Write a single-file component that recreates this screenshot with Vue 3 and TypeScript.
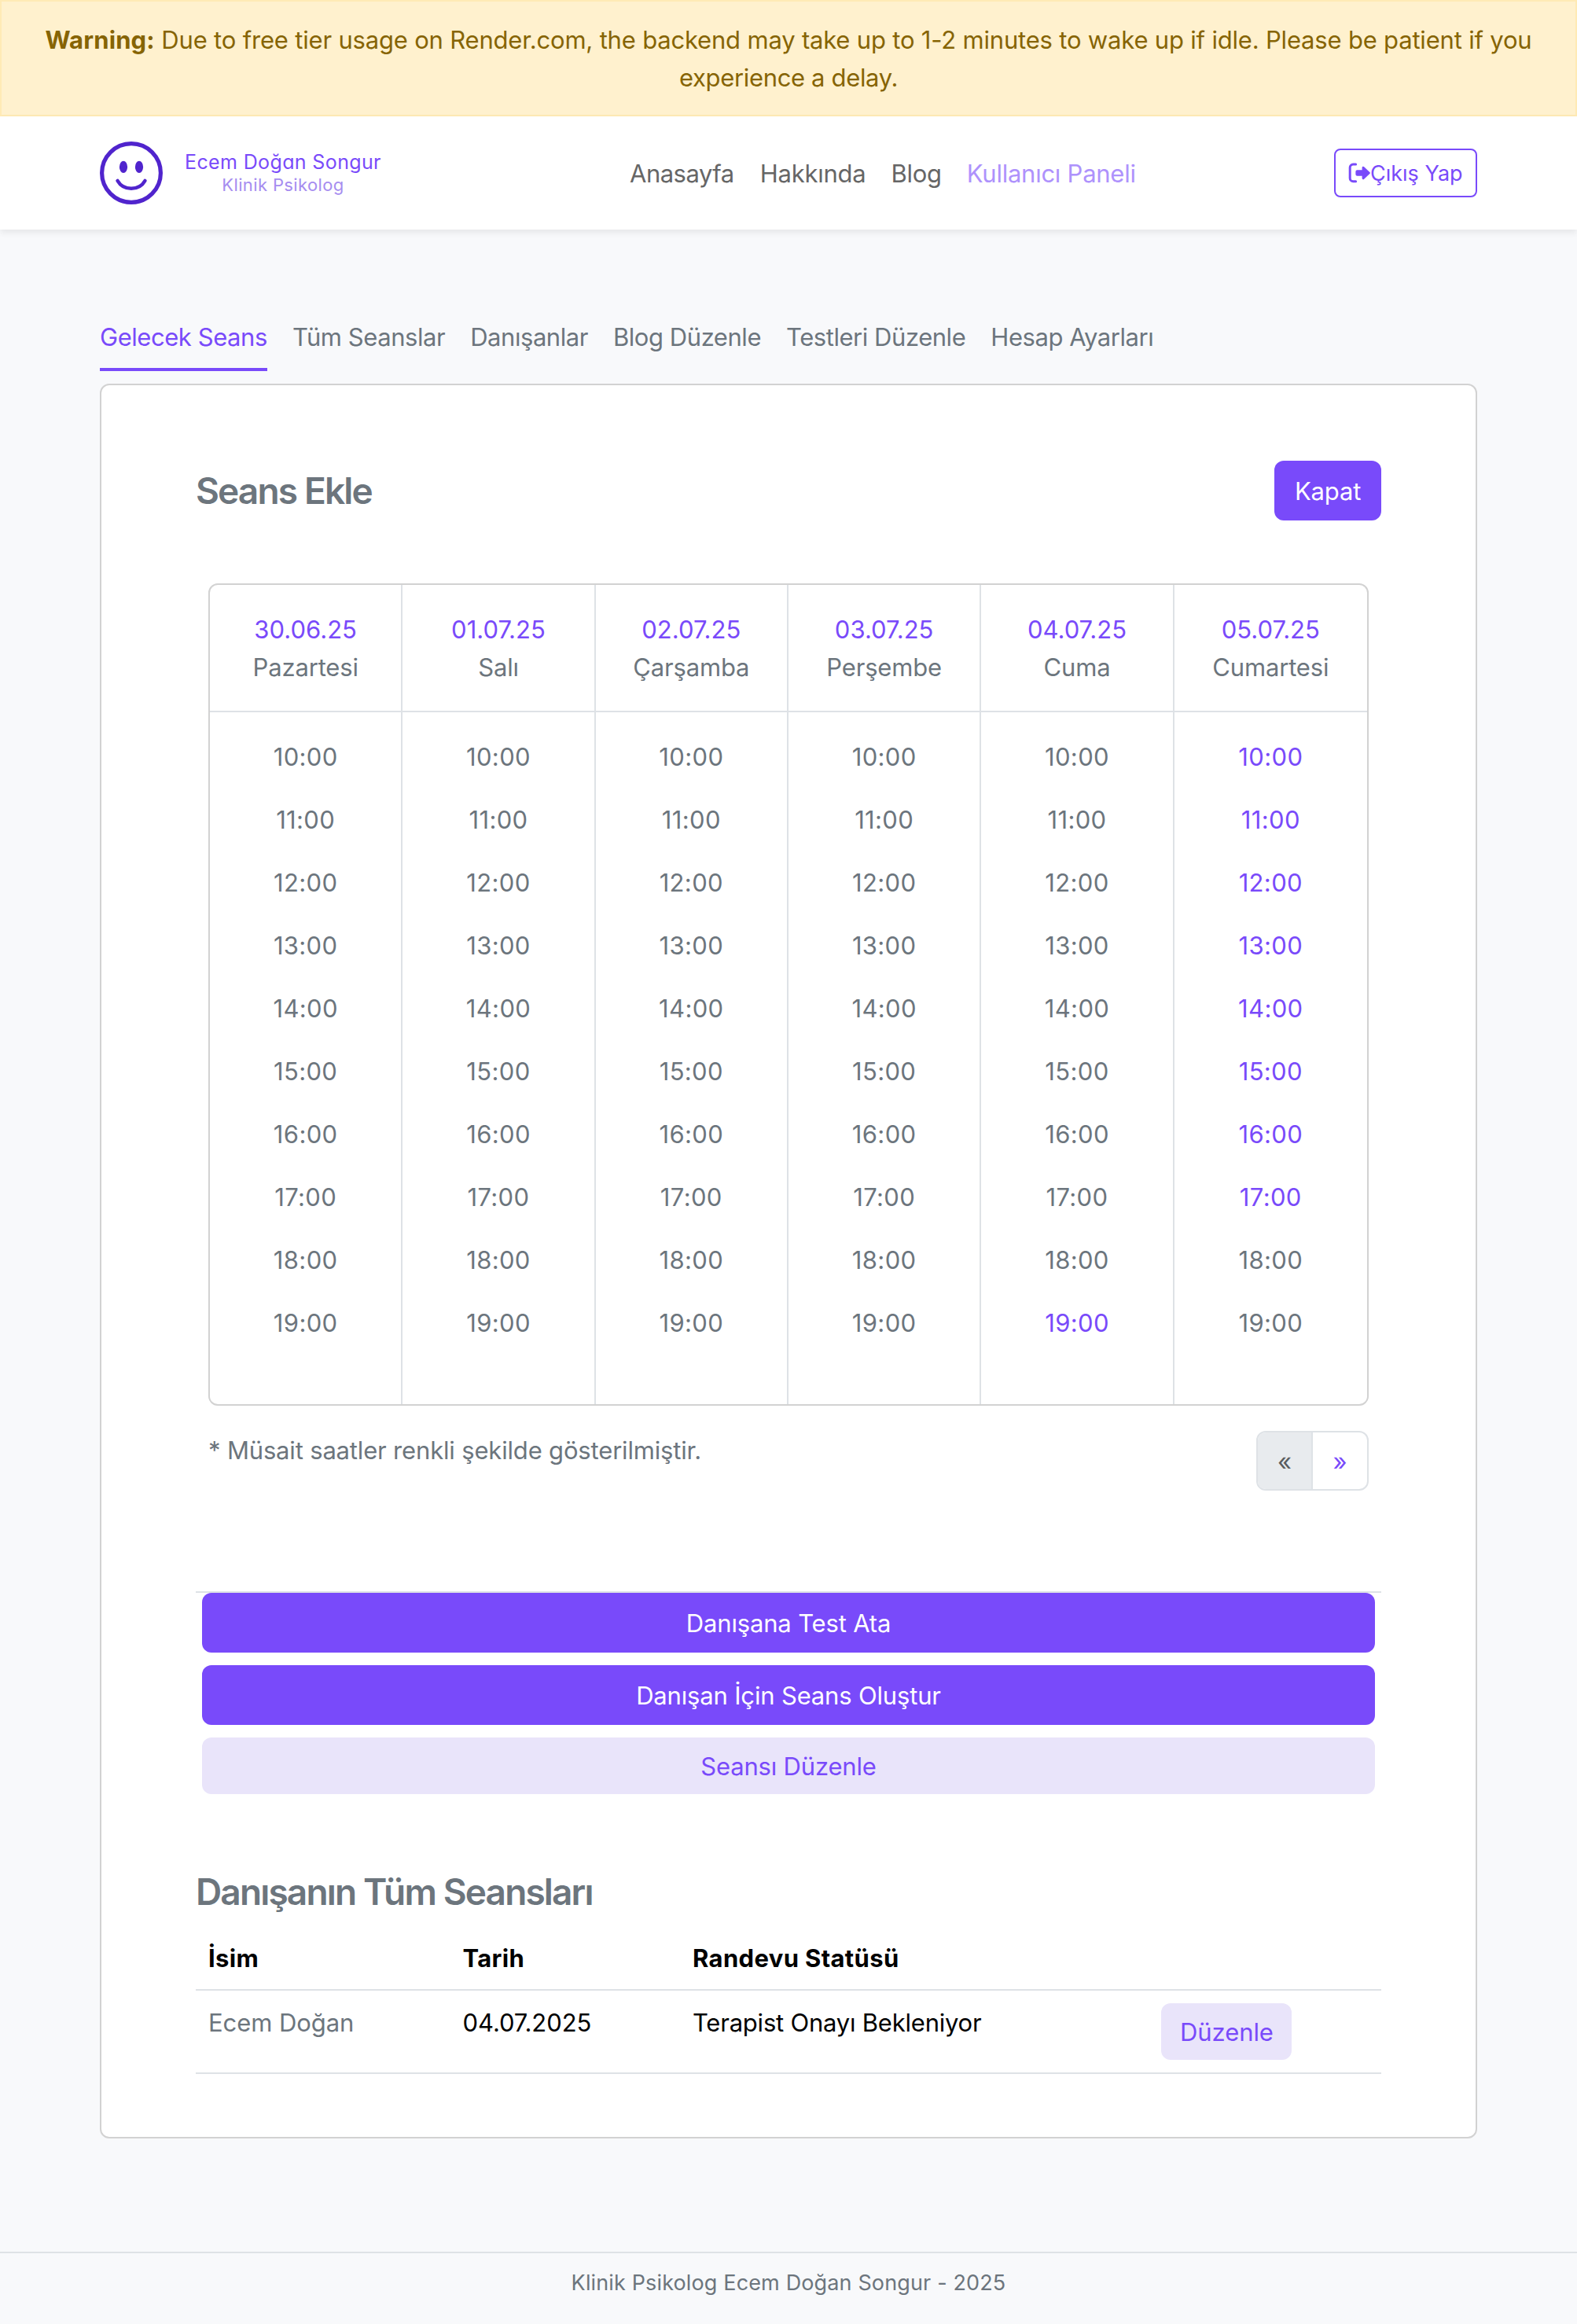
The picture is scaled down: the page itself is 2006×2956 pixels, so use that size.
<script setup lang="ts">
interface NavItem {
  label: string
  active?: boolean
}

interface Day {
  date: string
  name: string
  available: string[]
}

const links: NavItem[] = [
  { label: 'Anasayfa' },
  { label: 'Hakkında' },
  { label: 'Blog' },
  { label: 'Kullanıcı Paneli', active: true },
]

const tabs: NavItem[] = [
  { label: 'Gelecek Seans', active: true },
  { label: 'Tüm Seanslar' },
  { label: 'Danışanlar' },
  { label: 'Blog Düzenle' },
  { label: 'Testleri Düzenle' },
  { label: 'Hesap Ayarları' },
]

const hours: string[] = Array.from({ length: 10 }, (_, i) => `${10 + i}:00`)

const days: Day[] = [
  { date: '30.06.25', name: 'Pazartesi', available: [] },
  { date: '01.07.25', name: 'Salı', available: [] },
  { date: '02.07.25', name: 'Çarşamba', available: [] },
  { date: '03.07.25', name: 'Perşembe', available: [] },
  { date: '04.07.25', name: 'Cuma', available: ['19:00'] },
  { date: '05.07.25', name: 'Cumartesi', available: hours.slice(0, 8) },
]

const sessions = [
  { name: 'Ecem Doğan', date: '04.07.2025', status: 'Terapist Onayı Bekleniyor' },
]
</script>

<template>
  <div class="page">
    <div class="alert" role="alert">
      <strong>Warning:</strong> Due to free tier usage on Render.com, the backend may take up to 1-2
      minutes to wake up if idle. Please be patient if you<br />
      <span class="alert-tail">experience a delay.</span>
    </div>

    <header class="navbar">
      <a class="brand">
        <svg class="logo" viewBox="0 0 80 80" width="80" height="80" fill="none">
          <circle cx="40" cy="40" r="37.4" stroke="#5024cd" stroke-width="5.2" />
          <ellipse cx="30" cy="32.4" rx="5.1" ry="7.6" fill="#5024cd" />
          <ellipse cx="50" cy="32.4" rx="5.1" ry="7.6" fill="#5024cd" />
          <path d="M22.5 49.8c7.6 13.2 27.4 13.2 35 0" stroke="#5024cd" stroke-width="4.4" stroke-linecap="round" />
        </svg>
        <span class="brand-text">
          <span class="brand-name">Ecem Doğan Songur</span>
          <span class="brand-role">Klinik Psikolog</span>
        </span>
      </a>
      <nav class="links">
        <a v-for="link in links" :key="link.label" class="link" :class="{ active: link.active }">{{ link.label }}</a>
      </nav>
      <button class="logout" type="button">
        <svg class="logout-icon" viewBox="0 0 28 26" width="28" height="26" fill="none">
          <path d="M9.6 2.1H6.2a4 4 0 0 0-4 4v13.6a4 4 0 0 0 4 4h3.4" stroke="currentColor" stroke-width="3" stroke-linecap="round" />
          <path d="M11.4 9.2h6.2V6.2a1.5 1.5 0 0 1 2.6-1l7.1 6.7a1.5 1.5 0 0 1 0 2.2l-7.1 6.7a1.5 1.5 0 0 1-2.6-1v-3h-6.2a2 2 0 0 1-2-2v-3.6a2 2 0 0 1 2-2z" fill="currentColor" />
        </svg>
        <span class="logout-label">Çıkış Yap</span>
      </button>
    </header>

    <main class="main">
      <nav class="tabs">
        <a v-for="tab in tabs" :key="tab.label" class="tab" :class="{ active: tab.active }">{{ tab.label }}</a>
      </nav>

      <section class="card">
        <div class="card-head">
          <h4 class="title">Seans Ekle</h4>
          <button class="btn primary" type="button">Kapat</button>
        </div>

        <div class="schedule">
          <div v-for="day in days" :key="day.date" class="day">
            <div class="day-head">
              <div class="day-date">{{ day.date }}</div>
              <div>{{ day.name }}</div>
            </div>
            <ul class="hours">
              <li
                v-for="hour in hours"
                :key="hour"
                class="hour"
                :class="{ available: day.available.includes(hour) }"
              >{{ hour }}</li>
            </ul>
          </div>
        </div>

        <div class="schedule-foot">
          <p class="note">* Müsait saatler renkli şekilde gösterilmiştir.</p>
          <div class="pagination">
            <span class="page-link disabled">«</span>
            <span class="page-link">»</span>
          </div>
        </div>

        <div class="actions">
          <button class="btn primary" type="button">Danışana Test Ata</button>
          <button class="btn primary" type="button">Danışan İçin Seans Oluştur</button>
          <button class="btn soft" type="button">Seansı Düzenle</button>
        </div>

        <h4 class="title list-title">Danışanın Tüm Seansları</h4>
        <table class="table">
          <colgroup>
            <col class="col-name" />
            <col class="col-date" />
            <col class="col-status" />
            <col />
          </colgroup>
          <thead>
            <tr>
              <th>İsim</th>
              <th>Tarih</th>
              <th>Randevu Statüsü</th>
              <th></th>
            </tr>
          </thead>
          <tbody>
            <tr v-for="session in sessions" :key="session.date">
              <td class="muted">{{ session.name }}</td>
              <td>{{ session.date }}</td>
              <td class="status">{{ session.status }}</td>
              <td class="action"><button class="btn soft" type="button">Düzenle</button></td>
            </tr>
          </tbody>
        </table>
      </section>
    </main>

    <footer class="footer">Klinik Psikolog Ecem Doğan Songur - 2025</footer>
  </div>
</template>

<style>
body {
  background: #f8f9fb;
}
</style>

<style scoped>
.page,
.page * {
  box-sizing: border-box;
}

.page {
  display: flex;
  flex-direction: column;
  width: 2006px;
  height: 2956px;
  font-family: Inter, 'Liberation Sans', sans-serif;
  font-size: 31px;
  line-height: 48px;
  letter-spacing: -0.17px;
  color: #6c757d;
  background: #f8f9fb;
}

button {
  font: inherit;
  letter-spacing: inherit;
  margin: 0;
}

.alert {
  height: 148px;
  padding: 25px 20px 23px;
  border: 2px solid #ffeab5;
  background: #fff1ce;
  color: #866404;
  text-align: center;
  white-space: nowrap;
  letter-spacing: -0.19px;
}

.alert strong {
  font-weight: 700;
  letter-spacing: 0.14px;
}

.alert-tail {
  letter-spacing: -0.34px;
}

.navbar {
  display: flex;
  align-items: center;
  justify-content: space-between;
  height: 144px;
  padding: 0 127px;
  background: #fff;
  box-shadow: 0 4px 8px rgba(0, 0, 0, 0.075);
}

.brand {
  display: flex;
  align-items: center;
  width: 674px;
}

.logo {
  display: block;
}

.brand-text {
  display: flex;
  flex-direction: column;
  align-items: center;
  margin-left: 28px;
  font-feature-settings: 'cv11';
}

.brand-name {
  font-size: 25px;
  line-height: 30px;
  letter-spacing: 0.37px;
  color: #794afa;
}

.brand-role {
  font-size: 22px;
  line-height: 28px;
  letter-spacing: 0.36px;
  color: #a68df0;
}

.links {
  display: flex;
  flex: 1;
  gap: 32px;
  padding-top: 1px;
  color: #666;
}

.link {
  letter-spacing: -0.25px;
}

.link:first-child {
  margin-right: 1px;
  letter-spacing: -0.5px;
}

.link.active {
  color: #ae92fc;
}

.logout {
  display: flex;
  align-items: center;
  width: 182px;
  height: 62px;
  padding: 0 0 0 16px;
  border: 2px solid #794afa;
  border-radius: 8px;
  background: #fff;
  color: #794afa;
  font-size: 27px;
  line-height: 42px;
  white-space: nowrap;
}

.logout-icon {
  display: block;
  flex: none;
}

.logout-label {
  padding-top: 1px;
  letter-spacing: 0;
}

.main {
  padding: 96px 127px 0;
}

.tabs {
  display: flex;
  gap: 32px;
  height: 84px;
  margin-bottom: 16px;
}

.tab {
  padding: 17px 0 15px;
  border-bottom: 4px solid transparent;
  letter-spacing: -0.45px;
}

.tab.active {
  width: 213px;
  border-color: #794afa;
  color: #794afa;
  white-space: nowrap;
}

.card {
  height: 2232px;
  padding: 96px 120px 80px;
  border: 2px solid #d2d2d2;
  border-radius: 12px;
  background: #fff;
}

.card-head {
  display: flex;
  align-items: center;
  justify-content: space-between;
  height: 76px;
}

.title {
  margin: 0;
  font-size: 46px;
  font-weight: 600;
  line-height: 58px;
  letter-spacing: -1.85px;
}

.btn {
  display: block;
  padding: 13px 24px 11px;
  border: 0;
  border-radius: 12px;
  text-align: center;
}

.btn.primary {
  height: 76px;
  background: #794afa;
  color: #fff;
}

.card-head .btn {
  width: 136px;
}

.btn.soft {
  height: 72px;
  background: #e9e4fa;
  color: #794afa;
}

.schedule {
  display: grid;
  grid-template-columns: repeat(6, minmax(0, 1fr));
  height: 1046px;
  margin: 80px 16px 0;
  border: 2px solid #d2d2d2;
  border-radius: 12px;
  text-align: center;
  overflow: hidden;
}

.day {
  border-right: 2px solid #dee2e6;
}

.day:last-child {
  border-right: 0;
}

.day-head {
  height: 162px;
  padding: 33px 0 31px;
  border-bottom: 2px solid #dee2e6;
}

.day-date {
  letter-spacing: 0.02px;
  color: #794afa;
}

.hours {
  margin: 0;
  padding: 17px 0 0;
  list-style: none;
}

.hour {
  padding: 16px 0;
  letter-spacing: 0.35px;
}

.hour.available {
  color: #794afa;
}

.schedule-foot {
  display: flex;
  justify-content: space-between;
  align-items: flex-start;
  margin: 32px 16px 0;
}

.note {
  margin: 0;
  padding-top: 1px;
}

.pagination {
  display: flex;
  width: 143px;
  height: 76px;
  border: 2px solid #dee2e6;
  border-radius: 12px;
  background: #fff;
  overflow: hidden;
}

.page-link {
  flex: 1;
  padding: 13px 0 11px;
  text-align: center;
  color: #794afa;
}

.page-link.disabled {
  flex: 0 0 70px;
  border-right: 2px solid #dee2e6;
  background: #e8ebee;
  color: #5a5d60;
}

.actions {
  display: flex;
  flex-direction: column;
  gap: 16px;
  margin-top: 128px;
  padding: 0 8px;
  border-top: 2px solid #dee2e6;
}

.list-title {
  margin: 95px 0 15px;
}

.table {
  width: 100%;
  table-layout: fixed;
  border-collapse: separate;
  border-spacing: 0;
  text-align: left;
  color: #000;
}

.col-name {
  width: 323.5px;
}

.col-date {
  width: 292.5px;
}

.col-status {
  width: 596px;
}

.table th,
.table td {
  padding: 17px 16px 15px;
  border-bottom: 2px solid #dee2e6;
  vertical-align: top;
}

.table th {
  height: 82px;
  font-weight: 700;
  letter-spacing: 0.35px;
}

.table td {
  letter-spacing: -0.07px;
}

.table .status {
  letter-spacing: -0.22px;
}

.table .action {
  padding: 16px;
}

.table .muted {
  color: #6c757d;
}

.table .btn {
  width: 166px;
}

.footer {
  margin-top: 144px;
  padding: 17px 0 31px;
  border-top: 2px solid #dee2e6;
  font-size: 27px;
  line-height: 42px;
  letter-spacing: 0.14px;
  text-align: center;
}
</style>
